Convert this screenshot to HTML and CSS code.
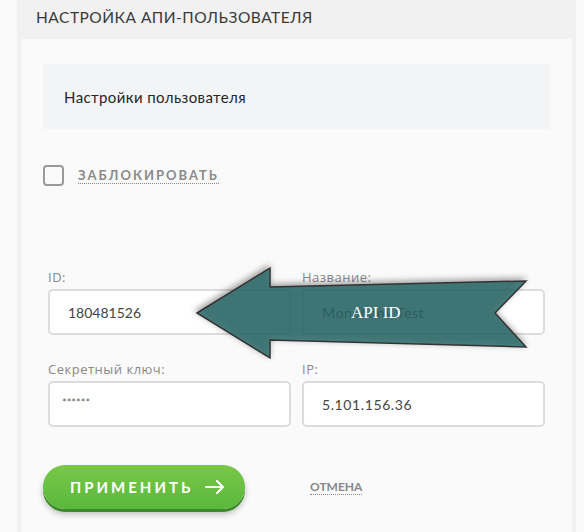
FILE: index.html
```html
<!DOCTYPE html>
<html lang="ru">
<head>
<meta charset="utf-8">
<title>Настройка АПИ-пользователя</title>
<link rel="stylesheet" href="styles.css">
</head>
<body>
<div class="page">
  <div class="frame">
    <div class="head">Настройка АПИ-пользователя</div>
    <div class="panel">
      <div class="section-box">Настройки пользователя</div>
      <div class="check-row">
        <span class="checkbox"></span>
        <span class="check-label">Заблокировать</span>
      </div>
      <div class="fields">
        <div class="field">
          <div class="field-label">ID:</div>
          <div class="input">180481526</div>
        </div>
        <div class="field">
          <div class="field-label">Название:</div>
          <div class="input input-wide">Monobank Test</div>
        </div>
        <div class="field">
          <div class="field-label">Секретный ключ:</div>
          <div class="input input-secret">******</div>
        </div>
        <div class="field">
          <div class="field-label">IP:</div>
          <div class="input input-wide">5.101.156.36</div>
        </div>
      </div>
      <div class="actions">
        <button class="btn-apply">Применить
          <svg class="btn-arrow" width="20" height="14" viewBox="0 0 20 14"><path d="M1 7 H18 M12 1 L18 7 L12 13" fill="none" stroke="#fff" stroke-width="2" stroke-linecap="round" stroke-linejoin="round"/></svg>
        </button>
        <span class="cancel">Отмена</span>
      </div>
    </div>
  </div>
  <svg class="annotation" width="584" height="532" viewBox="0 0 584 532">
    <polygon class="arrow-shape" points="197,313 270,268 270,287 526,281 495,313 526,347 270,340 270,358"/>
    <text class="arrow-text" x="351" y="318">API ID</text>
  </svg>
</div>
</body>
</html>
```
FILE: styles.css
```css
* { box-sizing: border-box; }
html, body { margin: 0; padding: 0; }
body {
  background: #f9f9f9;
  font-family: Lato, "Noto Sans", sans-serif;
}
.page {
  position: relative;
  width: 584px;
  height: 532px;
  overflow: hidden;
}
.frame {
  margin-left: 17px;
  width: 559px;
  height: 532px;
  background: #f1f1f1;
  padding: 0 4px;
  display: flex;
  flex-direction: column;
}
.head {
  height: 39px;
  line-height: 35px;
  padding-left: 15px;
  font-size: 15.5px;
  letter-spacing: 0.5px;
  text-transform: uppercase;
  color: #3a3a3a;
}
.panel {
  flex: 1;
  background: #fafafa;
  padding: 25px 22px 0;
  display: flex;
  flex-direction: column;
}
.section-box {
  height: 65px;
  background: #f3f4f6;
  padding-left: 21px;
  display: flex;
  align-items: center;
  font-size: 15px;
  letter-spacing: 0.4px;
  color: #262626;
}
.check-row {
  margin-top: 36px;
  display: flex;
  align-items: center;
}
.checkbox {
  width: 21px;
  height: 21px;
  border: 2px solid #9a9a9a;
  border-radius: 4px;
}
.check-label {
  margin-left: 14px;
  font-size: 13px;
  font-weight: 700;
  letter-spacing: 2px;
  text-transform: uppercase;
  color: #8a8a8a;
  line-height: 15px;
  border-bottom: 1px dotted #888;
}
.fields {
  margin: 83px 5px 0;
  display: grid;
  grid-template-columns: 1fr 1fr;
  column-gap: 11px;
  row-gap: 26px;
}
.field-label {
  font-family: "Open Sans", Lato, sans-serif;
  font-size: 13px;
  letter-spacing: 0.5px;
  line-height: 16px;
  color: #888;
  margin-bottom: 4px;
}
.input {
  height: 46px;
  border: 2px solid #dcdcdc;
  border-radius: 5px;
  background: #fff;
  padding-left: 18px;
  display: flex;
  align-items: center;
  font-size: 14px;
  color: #444;
}
.input-wide {
  letter-spacing: 0.6px;
}
.input-secret {
  padding-left: 12px;
  font-size: 11px;
  letter-spacing: 0;
  color: #666;
  align-items: flex-start;
  padding-top: 13px;
}
.actions {
  margin-top: 38px;
  display: flex;
  align-items: center;
}
.btn-apply {
  width: 202px;
  height: 44px;
  border: none;
  border-radius: 23px;
  background: linear-gradient(#79c747, #5ab83d);
  box-shadow: 0 3px 0 #3e8a2a, 0 5px 6px rgba(0, 0, 0, 0.25);
  color: #fff;
  font-family: Lato, "Noto Sans", sans-serif;
  font-size: 15px;
  font-weight: 700;
  letter-spacing: 3px;
  text-transform: uppercase;
  padding: 0 0 0 27px;
  display: flex;
  align-items: center;
}
.btn-arrow {
  margin-left: 12px;
}
.cancel {
  margin-left: 65px;
  font-size: 12px;
  font-weight: 700;
  text-transform: uppercase;
  color: #888;
  line-height: 14px;
  border-bottom: 1px dotted #888;
}
.annotation {
  position: absolute;
  left: 0;
  top: 0;
  pointer-events: none;
}
.arrow-shape {
  fill: rgba(42, 106, 107, 0.82);
  stroke: #333;
  stroke-width: 1.5;
  stroke-linejoin: miter;
  filter: drop-shadow(-1px -2px 3px rgba(0, 0, 0, 0.45));
}
.arrow-text {
  font-family: "Liberation Serif", serif;
  font-size: 17px;
  fill: #fff;
}
```
